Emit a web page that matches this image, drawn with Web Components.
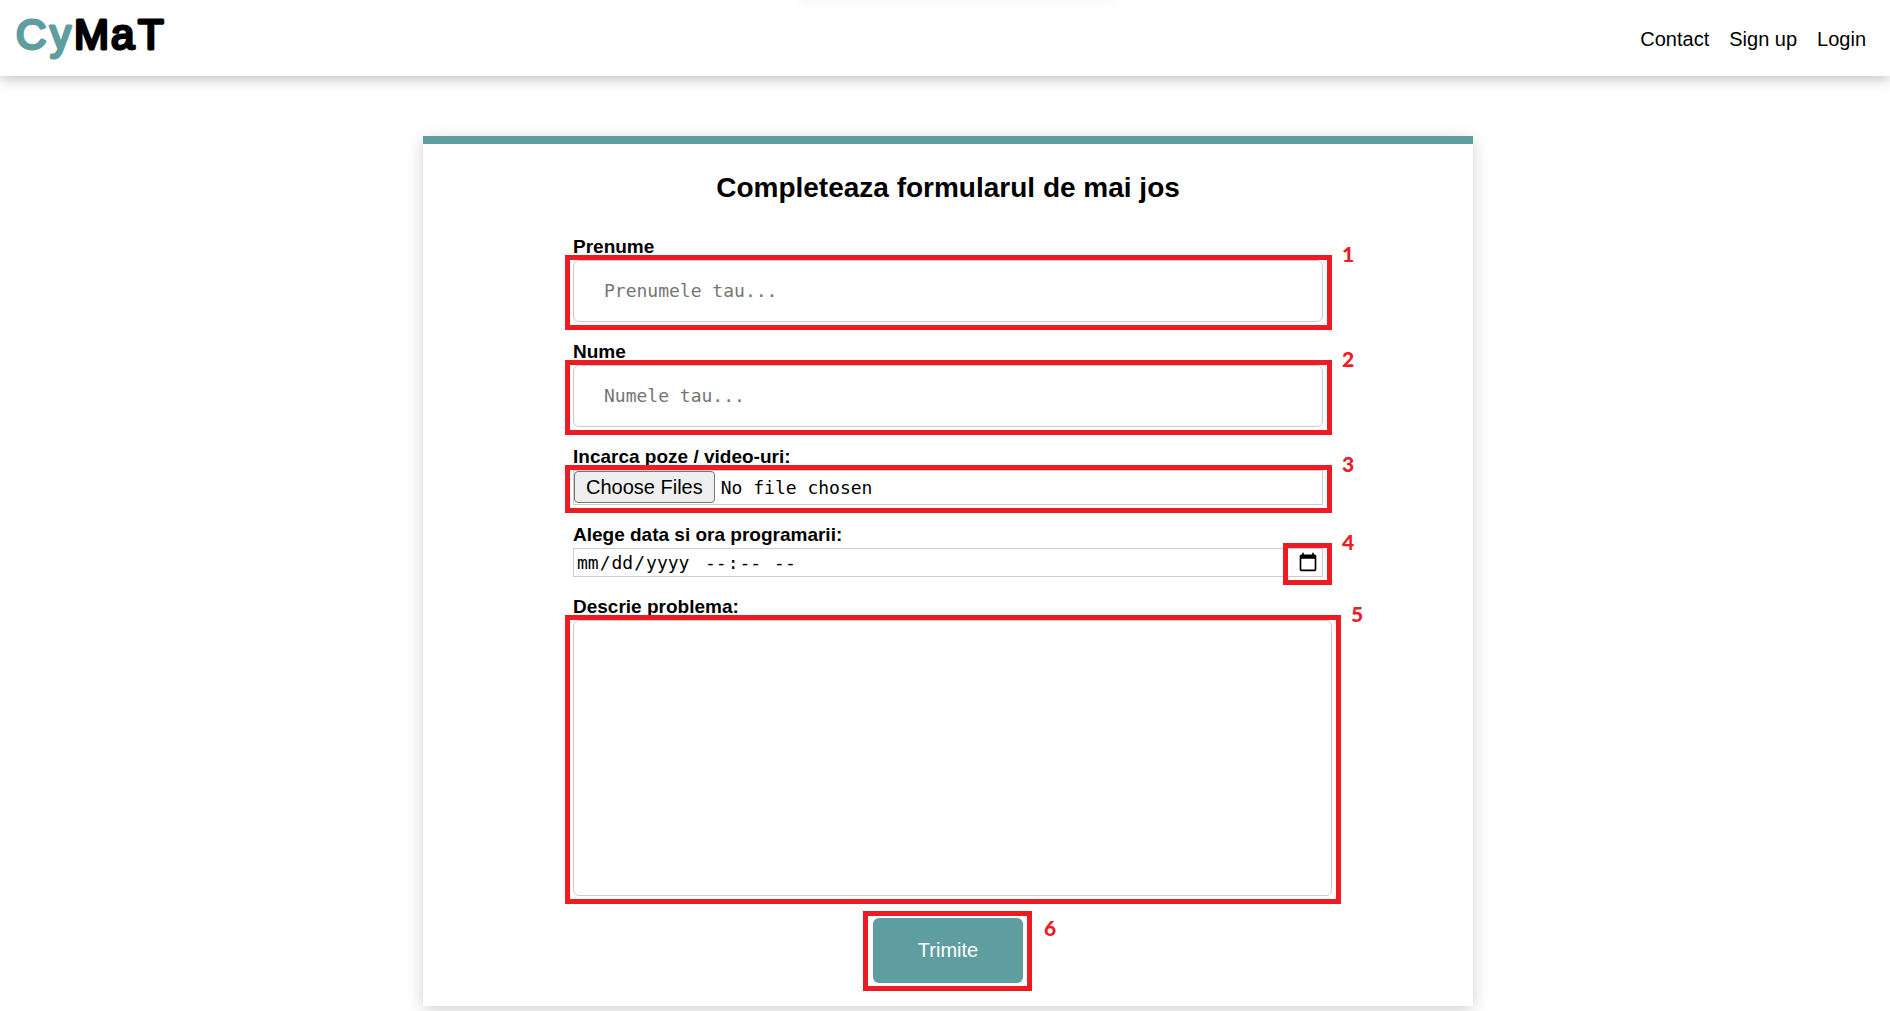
<!DOCTYPE html>
<html lang="en">
<head>
<meta charset="utf-8">
<title>CyMaT</title>
<style>
  body { margin: 0; background: #fff; color: #000; font: 20px/23px "Liberation Sans", Arial, sans-serif; }
</style>
</head>
<body>
<cymat-page></cymat-page>
<script>
const define = (name, html) => {
  const template = document.createElement('template');
  template.innerHTML = html;
  customElements.define(name, class extends HTMLElement {
    constructor() {
      super();
      this.attachShadow({ mode: 'open' }).append(template.content.cloneNode(true));
    }
  });
};

define('site-logo', `
  <style>
    :host { display: block; }
    a, svg { display: block; }
    text { font: 42px "Liberation Sans", Arial, sans-serif; stroke-width: 3px; stroke-linejoin: round; }
    .teal { fill: #5f9ea0; stroke: #5f9ea0; }
    .dark { fill: #000; stroke: #000; }
  </style>
  <a href="#" aria-label="CyMaT">
    <svg width="168" height="76" viewBox="0 0 168 76">
      <text y="49"><tspan class="teal" x="16 50">Cy</tspan><tspan class="dark" x="74 111 138">MaT</tspan></text>
    </svg>
  </a>`);

define('site-header', `
  <style>
    :host { display: flex; justify-content: space-between; align-items: center; height: 76px; position: relative;
            box-shadow: 0 4px 12px rgba(0,0,0,.22); }
    :host::before { content: ""; position: absolute; left: 50%; top: -20px; width: 320px; height: 16px; margin-left: -148px;
            box-shadow: 0 2px 16px rgba(0,0,0,.07); }
    nav { display: flex; gap: 20px; padding: 2px 24px 0 0; }
    a { color: inherit; text-decoration: none; }
  </style>
  <site-logo></site-logo>
  <nav><a href="#">Contact</a><a href="#">Sign up</a><a href="#">Login</a></nav>`);

/* Wraps a control and draws a numbered red frame over it. */
define('numbered-mark', `
  <style>
    :host { display: block; position: relative; }
    .frame { position: absolute; inset: var(--mark-inset, -5px -9px -8px -8px);
             box-sizing: border-box; border: 5px solid #ed1c24; pointer-events: none; }
    .number { position: absolute; left: 100%; top: var(--number-top, -18px); margin-left: var(--number-gap, 15px);
              font: 900 21px/24px Lato, sans-serif; color: #ed1c24; }
  </style>
  <slot></slot>
  <div class="frame"><span class="number"></span></div>`);

define('cymat-form', `
  <style>
    :host { display: block; box-sizing: border-box; width: 1050px; max-width: 100%; margin: 0 auto;
            padding: 28px 150px 23px; border-top: 8px solid #5f9ea0; background: #fff;
            box-shadow: 0 4px 16px rgba(0,0,0,.18); }
    h1 { margin: 0 0 33px; font-size: 28px; line-height: 32px; text-align: center; }
    form { display: flex; flex-direction: column; gap: 20px; }
    label { display: block; padding-bottom: 4px; font-size: 19px; line-height: 19px; font-weight: bold; }
    input, textarea { display: block; box-sizing: border-box; width: 100%; margin: 0; border: 1px solid #ccc;
            background: #fff; color: #000; font: 18px/22px "DejaVu Sans Mono", monospace; }
    input::placeholder { color: #757575; }
    input[type=text] { height: 62px; padding: 0 30px 2px; border-radius: 6px; }
    input[type=file] { height: 35px; padding: 0; line-height: 32px; }
    input::file-selector-button { box-sizing: border-box; height: 32px; margin: 0 6px 0 0; padding: 0 11px; border: 1px solid #767676; border-radius: 4px;
            background: #efefef; font: 20px/30px "Liberation Sans", Arial, sans-serif; }
    textarea { width: 100%; height: 276px; padding: 3px; border-radius: 6px; resize: none; }
    .date { display: grid; }
    .date > * { grid-area: 1 / 1; }
    .moment { display: flex; box-sizing: border-box; height: 29px; padding: 0 2px; border: 1px solid #ccc; }
    .moment input { width: 128px; height: 27px; padding: 0; border: 0; }
    .moment input::-webkit-calendar-picker-indicator { display: none; }
    .picker { justify-self: end; width: 32px; }
    .picker button { display: grid; place-items: center; width: 32px; height: 29px; padding: 0 0 1px 2px; background: none; }
    .wide { width: calc(100% + 9px); }
    .submit { align-self: center; margin-top: 2px; --mark-inset: -7px -9px -8px -10px; --number-top: 0; --number-gap: 17px; }
    button { display: block; width: 150px; height: 65px; padding: 0; border: 0; border-radius: 6px; background: #5f9ea0;
            color: #fff; font: 20px/23px "Liberation Sans", Arial, sans-serif; }
  </style>
  <h1>Completeaza formularul de mai jos</h1>
  <form>
    <div><label for="first">Prenume</label>
      <numbered-mark data-number="1"><input id="first" type="text" placeholder="Prenumele tau..."></numbered-mark></div>
    <div><label for="last">Nume</label>
      <numbered-mark data-number="2"><input id="last" type="text" placeholder="Numele tau..."></numbered-mark></div>
    <div><label for="files">Incarca poze / video-uri:</label>
      <numbered-mark data-number="3"><input id="files" type="file" multiple></numbered-mark></div>
    <div><label for="day">Alege data si ora programarii:</label>
      <div class="date">
        <div class="moment"><input id="day" type="date"><input type="time" aria-label="Ora programarii"></div>
        <numbered-mark class="picker" data-number="4"><button type="button" aria-label="Calendar">
          <svg width="20" height="20" viewBox="0 0 24 24"><path d="M20 3h-1V1h-2v2H7V1H5v2H4c-1.1 0-2 .9-2 2v16c0 1.1.9 2 2 2h16c1.1 0 2-.9 2-2V5c0-1.1-.9-2-2-2zm0 18H4V8h16v13z"/></svg>
        </button></numbered-mark>
      </div></div>
    <div><label for="issue">Descrie problema:</label>
      <numbered-mark class="wide" data-number="5"><textarea id="issue"></textarea></numbered-mark></div>
    <numbered-mark class="submit" data-number="6"><button type="button">Trimite</button></numbered-mark>
  </form>`);

define('cymat-page', `
  <style>
    :host { display: block; }
    main { padding: 60px 0 5px 6px; }
  </style>
  <site-header></site-header>
  <main><cymat-form></cymat-form></main>`);

const form = document.querySelector('cymat-page').shadowRoot.querySelector('cymat-form');
form.shadowRoot.querySelectorAll('numbered-mark').forEach(mark => {
  mark.shadowRoot.querySelector('.number').textContent = mark.dataset.number;
});
form.shadowRoot.querySelector('.picker button').addEventListener('click', () => {
  form.shadowRoot.querySelector('#day').showPicker();
});
</script>
</body>
</html>
